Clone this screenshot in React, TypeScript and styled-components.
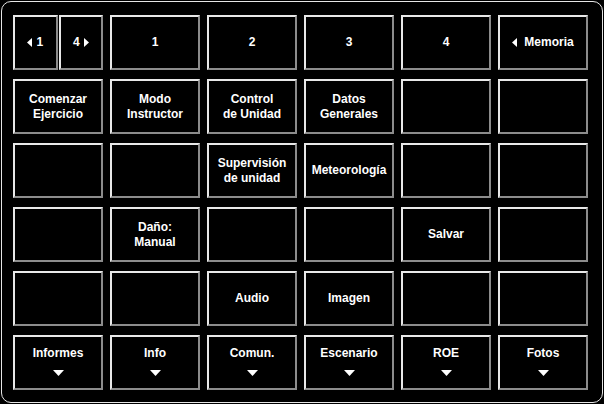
import React from "react";
import styled, { createGlobalStyle } from "styled-components";

const Global = createGlobalStyle`
  html, body { margin: 0; padding: 0; background: #000; }
  body { font-family: "Liberation Sans", Arial, sans-serif; }
`;

const Frame = styled.div`
  box-sizing: border-box;
  width: 602px;
  height: 402px;
  margin: 1px 0 0 1px;
  border: 1px solid #e6e6e6;
  border-radius: 10px;
  background: #000;
  padding: 13px 0 0 11px;
`;

const Grid = styled.div`
  display: grid;
  grid-template-columns: repeat(6, 90px);
  grid-auto-rows: 55px;
  column-gap: 7px;
  row-gap: 9px;
`;

const Button = styled.div<{ $menu?: boolean }>`
  box-sizing: border-box;
  min-width: 0;
  display: flex;
  flex-direction: column;
  align-items: center;
  justify-content: ${(p) => (p.$menu ? "flex-start" : "center")};
  padding-top: ${(p) => (p.$menu ? "9px" : "0")};
  gap: 9px;
  border-style: solid;
  border-width: 2px;
  border-color: #e8e8e8 #8c8c8c #8c8c8c #e8e8e8;
  background: #000;
  color: #fff;
  font-weight: bold;
  font-size: 12px;
  line-height: 15px;
  text-align: center;
`;

const Split = styled.div`
  display: flex;
  gap: 1px;
  min-width: 0;
`;

const HalfButton = styled(Button)`
  flex: 1;
  flex-direction: row;
  gap: 4px;
`;

const Label = styled.span`
  white-space: pre-line;
`;

const LeftTri = () => (
  <svg width="5" height="9" viewBox="0 0 5 9">
    <polygon points="5,0 5,9 0,4.5" fill="#fff" />
  </svg>
);

const RightTri = () => (
  <svg width="5" height="9" viewBox="0 0 5 9">
    <polygon points="0,0 0,9 5,4.5" fill="#fff" />
  </svg>
);

const DownTri = () => (
  <svg width="11" height="6" viewBox="0 0 11 6">
    <polygon points="0,0 11,0 5.5,6" fill="#fff" />
  </svg>
);

const rows: string[][] = [
  ["Comenzar\nEjercicio", "Modo\nInstructor", "Control\nde Unidad", "Datos\nGenerales", "", ""],
  ["", "", "Supervisión\nde unidad", "Meteorología", "", ""],
  ["", "Daño:\nManual", "", "", "Salvar", ""],
  ["", "", "Audio", "Imagen", "", ""],
];

const menus = ["Informes", "Info", "Comun.", "Escenario", "ROE", "Fotos"];

export default function App() {
  return (
    <>
      <Global />
      <Frame>
        <Grid>
          <Split>
            <HalfButton>
              <LeftTri />
              <span>1</span>
            </HalfButton>
            <HalfButton>
              <span>4</span>
              <RightTri />
            </HalfButton>
          </Split>
          {["1", "2", "3", "4"].map((n) => (
            <Button key={"p" + n}>
              <Label>{n}</Label>
            </Button>
          ))}
          <HalfButton as="div">
            <LeftTri />
            <span style={{ marginLeft: 3 }}>Memoria</span>
          </HalfButton>
          {rows.flatMap((r, i) =>
            r.map((t, j) => (
              <Button key={`r${i}c${j}`}>
                <Label>{t}</Label>
              </Button>
            ))
          )}
          {menus.map((m) => (
            <Button key={m} $menu>
              <Label>{m}</Label>
              <DownTri />
            </Button>
          ))}
        </Grid>
      </Frame>
    </>
  );
}
